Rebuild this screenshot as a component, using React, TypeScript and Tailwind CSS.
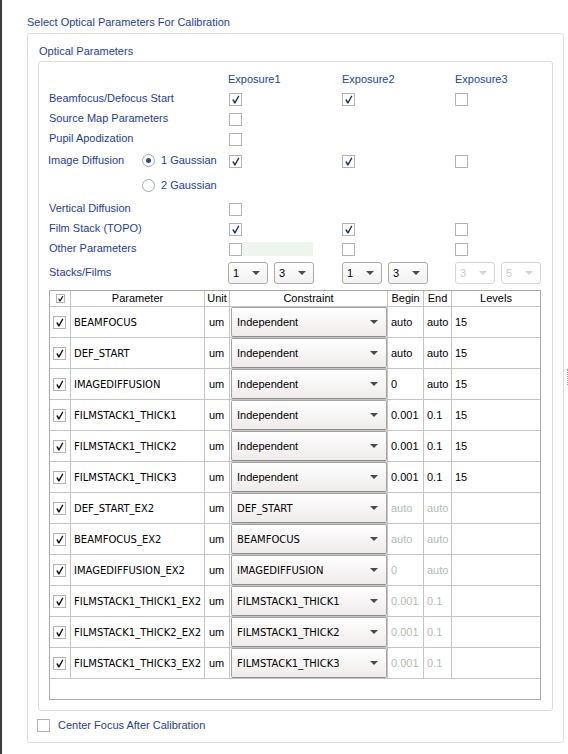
import React from "react";

type Row = {
  name: string;
  constraint: string;
  begin: string;
  end: string;
  levels: string;
  dim: boolean;
};

const rows: Row[] = [
  { name: "BEAMFOCUS", constraint: "Independent", begin: "auto", end: "auto", levels: "15", dim: false },
  { name: "DEF_START", constraint: "Independent", begin: "auto", end: "auto", levels: "15", dim: false },
  { name: "IMAGEDIFFUSION", constraint: "Independent", begin: "0", end: "auto", levels: "15", dim: false },
  { name: "FILMSTACK1_THICK1", constraint: "Independent", begin: "0.001", end: "0.1", levels: "15", dim: false },
  { name: "FILMSTACK1_THICK2", constraint: "Independent", begin: "0.001", end: "0.1", levels: "15", dim: false },
  { name: "FILMSTACK1_THICK3", constraint: "Independent", begin: "0.001", end: "0.1", levels: "15", dim: false },
  { name: "DEF_START_EX2", constraint: "DEF_START", begin: "auto", end: "auto", levels: "", dim: true },
  { name: "BEAMFOCUS_EX2", constraint: "BEAMFOCUS", begin: "auto", end: "auto", levels: "", dim: true },
  { name: "IMAGEDIFFUSION_EX2", constraint: "IMAGEDIFFUSION", begin: "0", end: "auto", levels: "", dim: true },
  { name: "FILMSTACK1_THICK1_EX2", constraint: "FILMSTACK1_THICK1", begin: "0.001", end: "0.1", levels: "", dim: true },
  { name: "FILMSTACK1_THICK2_EX2", constraint: "FILMSTACK1_THICK2", begin: "0.001", end: "0.1", levels: "", dim: true },
  { name: "FILMSTACK1_THICK3_EX2", constraint: "FILMSTACK1_THICK3", begin: "0.001", end: "0.1", levels: "", dim: true },
];

function Tick({ color }: { color: string }) {
  return (
    <svg width="13" height="13" viewBox="0 0 13 13" className="absolute left-[-1px] top-[-1px]">
      <polygon points="3.2,6.8 4.8,6.2 5.9,8.4 9.3,2.6 10.4,3.3 6.4,10.4 5.3,10.4" fill={color} />
    </svg>
  );
}

function Check({ on, dark = false }: { on: boolean; dark?: boolean }) {
  return (
    <div className="relative h-[13px] w-[13px] shrink-0 border border-[#b3b3b3] bg-white">
      {on && <Tick color={dark ? "#111111" : "#1b2f6b"} />}
    </div>
  );
}

function Radio({ on }: { on: boolean }) {
  return (
    <div className="flex h-[13px] w-[13px] items-center justify-center rounded-full border border-[#9fae9f] bg-white">
      {on && <div className="h-[5px] w-[5px] rounded-full bg-[#2d4a88]" />}
    </div>
  );
}

function Arrow({ light = false }: { light?: boolean }) {
  return (
    <div
      className={
        light
          ? "h-0 w-0 border-x-[4px] border-t-[4px] border-x-transparent border-t-[#d4d4d4]"
          : "h-0 w-0 border-x-[4px] border-t-[4px] border-x-transparent border-t-[#4a4a4a]"
      }
    />
  );
}

function Pick({ value, off = false }: { value: string; off?: boolean }) {
  return (
    <div
      className={
        off
          ? "flex h-[22px] w-[40px] items-center justify-between rounded-[3px] border border-[#d6d6d6] bg-white pl-[4px] pr-[7px] text-[11px] text-[#c3cbc3]"
          : "flex h-[22px] w-[40px] items-center justify-between rounded-[3px] border border-[#a9a9a9] bg-gradient-to-b from-white to-[#f3f1f1] pl-[4px] pr-[7px] text-[11px] text-black"
      }
    >
      <span>{value}</span>
      <Arrow light={off} />
    </div>
  );
}

function FormRow({ h, label, children }: { h: string; label?: React.ReactNode; children?: React.ReactNode }) {
  return (
    <div className={`grid grid-cols-[179px_114px_113px_1fr] items-center ${h}`}>
      <div className="pb-[2px]">{label}</div>
      {children}
    </div>
  );
}

const cols = "grid grid-cols-[21px_134px_25px_158px_36px_28px_88px]";

export default function App() {
  return (
    <div className="flex h-[754px] w-[568px] bg-white font-['Liberation_Sans',Arial,sans-serif] text-[11px]">
      <div className="w-[2px] bg-[#3b3a36]" />

      <div className="w-[562px] pl-[25px] pt-[15px]">
        <div className="h-[14px] leading-[14px] text-[#1f40a0]">Select Optical Parameters For Calibration</div>

        <div className="mt-[4px] h-[710px] w-[537px] rounded-[3px] border border-[#dedede] px-[10px]">
          <div className="ml-[1px] mt-[10px] h-[14px] leading-[14px] text-[#1f40a0]">Optical Parameters</div>

          <div className="mt-[3px] h-[650px] w-[515px] rounded-[3px] border border-[#dcdcdc] px-[10px] pt-[7px] text-[#1f3d96]">
            <FormRow h="h-[20px]">
              <div className="text-[#2145a8]">Exposure1</div>
              <div className="text-[#2145a8]">Exposure2</div>
              <div className="text-[#2145a8]">Exposure3</div>
            </FormRow>

            <FormRow h="h-[20px]" label="Beamfocus/Defocus Start">
              <div className="pl-[1px]"><Check on /></div>
              <div><Check on /></div>
              <div><Check on={false} /></div>
            </FormRow>

            <FormRow h="h-[20px]" label="Source Map Parameters">
              <div className="pl-[1px]"><Check on={false} /></div>
            </FormRow>

            <FormRow h="h-[20px]" label="Pupil Apodization">
              <div className="pl-[1px]"><Check on={false} /></div>
            </FormRow>

            <FormRow
              h="h-[24px]"
              label={
                <div className="-ml-[1px] flex items-center">
                  <span className="w-[94px]">Image Diffusion</span>
                  <Radio on />
                  <span className="ml-[6px]">1 Gaussian</span>
                </div>
              }
            >
              <div className="pl-[1px]"><Check on /></div>
              <div><Check on /></div>
              <div><Check on={false} /></div>
            </FormRow>

            <FormRow
              h="h-[26px]"
              label={
                <div className="flex items-center pl-[93px]">
                  <Radio on={false} />
                  <span className="ml-[6px]">2 Gaussian</span>
                </div>
              }
            />

            <FormRow h="h-[20px]" label="Vertical Diffusion">
              <div className="pl-[1px]"><Check on={false} /></div>
            </FormRow>

            <FormRow h="h-[20px]" label="Film Stack (TOPO)">
              <div className="pl-[1px]"><Check on /></div>
              <div><Check on /></div>
              <div><Check on={false} /></div>
            </FormRow>

            <FormRow h="h-[20px]" label="Other Parameters">
              <div className="flex items-center pl-[1px]">
                <Check on={false} />
                <div className="h-[14px] w-[71px] bg-[#eef5ec]" />
              </div>
              <div><Check on={false} /></div>
              <div><Check on={false} /></div>
            </FormRow>

            <FormRow h="h-[28px]" label="Stacks/Films">
              <div className="flex gap-[6px]">
                <Pick value="1" />
                <Pick value="3" />
              </div>
              <div className="flex gap-[6px]">
                <Pick value="1" />
                <Pick value="3" />
              </div>
              <div className="flex gap-[6px]">
                <Pick value="3" off />
                <Pick value="5" off />
              </div>
            </FormRow>

            <div className="mt-[3px] h-[410px] w-[492px] border border-[#a8a8a8] bg-white text-black">
              <div className={`${cols} h-[16px] border-b border-[#c4c4c4] text-center leading-[15px]`}>
                <div className="flex items-center justify-center border-r border-[#c4c4c4]">
                  <div className="relative h-[9px] w-[9px] border border-[#b3b3b3]">
                    <svg width="9" height="9" viewBox="0 0 9 9" className="absolute left-[-1px] top-[-1px]">
                      <polygon points="2,4.8 3.2,4.4 4,6 6.4,1.8 7.3,2.4 4.4,7.4 3.6,7.4" fill="#111" />
                    </svg>
                  </div>
                </div>
                <div className="border-r border-[#c4c4c4]">Parameter</div>
                <div className="border-r border-[#c4c4c4]">Unit</div>
                <div className="border-r border-[#c4c4c4]">Constraint</div>
                <div className="border-r border-[#c4c4c4]">Begin</div>
                <div className="border-r border-[#c4c4c4]">End</div>
                <div>Levels</div>
              </div>

              {rows.map((r) => (
                <div key={r.name} className={`${cols} h-[31px] border-b border-[#c4c4c4]`}>
                  <div className="flex items-center border-r border-[#c4c4c4] pl-[3px]">
                    <Check on dark />
                  </div>
                  <div className="flex items-center whitespace-nowrap border-r border-[#c4c4c4] pl-[3px] font-['DejaVu_Sans',sans-serif] text-[10px]">
                    {r.name}
                  </div>
                  <div className="flex items-center border-r border-[#c4c4c4] pl-[4px]">um</div>
                  <div className="border-r border-[#c4c4c4] pl-[1px]">
                    <div className="flex h-[30px] items-center justify-between rounded-[2px] border border-[#a3a3a3] border-b-[#8d8d8d] bg-gradient-to-b from-white to-[#f0ebeb] pl-[5px] pr-[8px]">
                      <span className={r.dim ? "font-['DejaVu_Sans',sans-serif] text-[10px]" : ""}>
                        {r.constraint}
                      </span>
                      <Arrow />
                    </div>
                  </div>
                  <div className={`flex items-center border-r border-[#c4c4c4] pl-[3px] ${r.dim ? "text-[#b3bcb3]" : ""}`}>
                    {r.begin}
                  </div>
                  <div className={`flex items-center border-r border-[#c4c4c4] pl-[3px] ${r.dim ? "text-[#b3bcb3]" : ""}`}>
                    {r.end}
                  </div>
                  <div className="flex items-center pl-[3px]">{r.levels}</div>
                </div>
              ))}
            </div>
          </div>

          <div className="mt-[6px] flex items-center">
            <div className="-ml-[1px] h-[13px] w-[13px] border border-[#b3b3b3] bg-white" />
            <span className="ml-[8px] text-[#1f3d96]">Center Focus After Calibration</span>
          </div>
        </div>
      </div>

      <div className="flex w-[4px] items-center justify-end">
        <div className="h-[16px] w-[1px] border-r border-dotted border-[#a0a0a0]" />
      </div>
    </div>
  );
}
